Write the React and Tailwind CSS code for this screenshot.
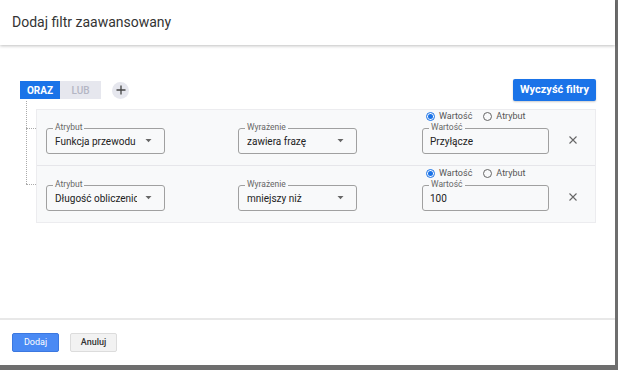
import React from "react";

function Select({ label, value }) {
  return (
    <div className="relative w-[119px] h-[26px] border border-[#a0a0a0] rounded-[3px] flex items-center pl-[8px] pr-[12px]">
      <span className="absolute -top-[7px] left-[6px] px-[2px] bg-[#f8f9fa] text-[8.5px] leading-[11px] text-[#666]">{label}</span>
      <span className="flex-1 text-[10px] text-[#222] whitespace-nowrap overflow-hidden">{value}</span>
      <svg width="7" height="4" viewBox="0 0 7 4" className="ml-[8px] shrink-0"><path d="M0.5 0 L6.5 0 L3.5 3.2 Z" fill="#666" /></svg>
    </div>
  );
}

function Radio({ checked, label }) {
  return (
    <div className="flex items-center gap-[4px]">
      <span className={"w-[9px] h-[9px] rounded-full border flex items-center justify-center " + (checked ? "border-[#1a73e8]" : "border-[#666]")}>
        {checked && <span className="w-[5px] h-[5px] rounded-full bg-[#1a73e8]" />}
      </span>
      <span className="text-[9px] text-[#555]">{label}</span>
    </div>
  );
}

function Row({ attr, expr, val, last }) {
  return (
    <div className={"h-[56px] flex items-end pb-[11px] pl-[9px] " + (last ? "" : "border-b border-[#e6e6ea]")}>
      <Select label="Atrybut" value={attr} />
      <div className="ml-[73px]"><Select label="Wyrażenie" value={expr} /></div>
      <div className="ml-[65px] flex flex-col">
        <div className="flex items-center gap-[11px] pl-[4px] mb-[5px]">
          <Radio checked label="Wartość" />
          <Radio label="Atrybut" />
        </div>
        <div className="relative w-[127px] h-[26px] border border-[#a0a0a0] rounded-[3px] flex items-center pl-[7px]">
          <span className="absolute -top-[7px] left-[6px] px-[2px] bg-[#f8f9fa] text-[8.5px] leading-[11px] text-[#666]">Wartość</span>
          <span className="text-[10px] text-[#222]">{val}</span>
        </div>
      </div>
      <div className="ml-[20px] mb-[10px]">
        <svg width="8" height="8" viewBox="0 0 8 8"><path d="M0.5 0.5 L7.5 7.5 M7.5 0.5 L0.5 7.5" stroke="#666" strokeWidth="1.1" /></svg>
      </div>
    </div>
  );
}

export default function App() {
  return (
    <div className="w-[618px] h-[370px] bg-[#6e6e6e] overflow-hidden" style={{ fontFamily: "Roboto, 'Noto Sans', sans-serif" }}>
      <div className="w-[615px] h-[365px] bg-white flex flex-col">
        <div className="relative z-10 h-[45px] flex items-center px-[12px] text-[14px] text-[#333] shadow-[0_1px_3px_rgba(0,0,0,0.25)]">
          Dodaj filtr zaawansowany
        </div>
        <div className="flex-1 pl-[20px] pr-[19px] pt-[34px]">
          <div className="flex items-center justify-between">
            <div className="flex items-center">
              <div className="flex h-[18px]">
                <div className="w-[40px] bg-[#1a73e8] text-white text-[10px] font-bold flex items-center justify-center">ORAZ</div>
                <div className="w-[41px] bg-[#e6e7ee] text-[#b4b6c4] text-[10px] font-medium flex items-center justify-center">LUB</div>
              </div>
              <div className="ml-[11px] w-[17px] h-[17px] rounded-full bg-[#e6e7ee] flex items-center justify-center">
                <svg width="10" height="10" viewBox="0 0 10 10"><path d="M5 0.5 V9.5 M0.5 5 H9.5" stroke="#444" strokeWidth="1.3" /></svg>
              </div>
            </div>
            <div className="w-[83px] h-[22px] bg-[#1a73e8] text-white text-[11px] font-bold rounded-[2px] flex items-center justify-center shadow-[0_1px_2px_rgba(0,0,0,0.2)]">
              Wyczyść filtry
            </div>
          </div>
          <div className="relative mt-[8px] ml-[16px]">
            <div className="absolute -left-[10px] -top-[8px] h-[83px] w-[10px] border-l border-dotted border-[#aaa]" />
            <div className="absolute -left-[10px] top-[19px] w-[10px] border-t border-dotted border-[#aaa]" />
            <div className="absolute -left-[10px] top-[75px] w-[10px] border-t border-dotted border-[#aaa]" />
            <div className="bg-[#f8f9fa] border border-[#ececef]">
              <Row attr="Funkcja przewodu" expr="zawiera frazę" val="Przyłącze" />
              <Row attr="Długość obliczeniowa" expr="mniejszy niż" val="100" last />
            </div>
          </div>
        </div>
        <div className="h-[47px] border-t-2 border-[#e8e8e8] flex items-center px-[12px] gap-[11px]">
          <div className="w-[47px] h-[19px] bg-[#4a8af4] border border-[#3b78e0] rounded-[2px] text-white text-[9px] flex items-center justify-center">Dodaj</div>
          <div className="w-[47px] h-[19px] bg-[#f2f2f2] border border-[#dcdcdc] rounded-[2px] text-[#333] text-[9px] font-medium flex items-center justify-center">Anuluj</div>
        </div>
      </div>
    </div>
  );
}
